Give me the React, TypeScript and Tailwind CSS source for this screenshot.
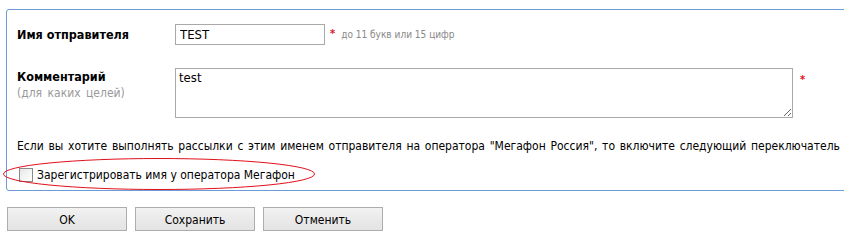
export default function App() {
  const font = { fontFamily: '"DejaVu Sans Condensed", "DejaVu Sans", sans-serif' };

  return (
    <div className="w-[844px] h-[243px] overflow-hidden bg-white text-[12px] text-black" style={font}>
      <div className="relative ml-[6px] mt-[9px] w-[900px] h-[182px] border border-[#6c9bd5] rounded-[3px] pl-[10px] pt-[14px]">
        <div className="flex items-center h-[21px]">
          <div className="w-[158px] font-bold pt-[1px] text-[12.5px]">Имя отправителя</div>
          <input
            readOnly
            defaultValue="TEST"
            className="w-[150px] h-[21px] border border-[#a9a9a9] px-[4px] text-[13px] outline-none"
            style={font}
          />
          <span className="ml-[5px] text-[#e0101a] text-[11px] font-bold">*</span>
          <span className="ml-[6px] text-[10px] text-[#888888]">до 11 букв или 15 цифр</span>
        </div>

        <div className="flex items-start mt-[23px]">
          <div className="w-[158px] pt-[1px] leading-[16px]">
            <div className="font-bold text-[12.5px]">Комментарий</div>
            <div className="text-[#999999] [word-spacing:2px]">(для каких целей)</div>
          </div>
          <textarea
            readOnly
            defaultValue="test"
            className="w-[618px] h-[50px] border border-[#a9a9a9] px-[3px] py-[1px] text-[13px] leading-[16px] outline-none"
            style={font}
          />
          <span className="ml-[7px] mt-[4px] text-[#e0101a] text-[11px] font-bold">*</span>
        </div>

        <p className="mt-[20px] leading-[16px] whitespace-nowrap [word-spacing:1.3px]">
          Если вы хотите выполнять рассылки с этим именем отправителя на оператора "Мегафон Россия", то включите следующий переключатель
        </p>

        <label className="flex items-center mt-[13px] h-[16px]">
          <span className="ml-[2px] w-[14px] h-[14px] border border-[#8a8a8a] bg-gradient-to-br from-[#e8e8e8] to-white" />
          <span className="ml-[4px]">Зарегистрировать имя у оператора Мегафон</span>
        </label>

        <svg className="absolute left-[-5px] top-[147px]" width="320" height="34" viewBox="0 0 320 34">
          <ellipse cx="157" cy="17" rx="155.5" ry="15.5" fill="none" stroke="#e0101a" strokeWidth="1" />
        </svg>
      </div>

      <div className="flex gap-[8px] ml-[7px] mt-[16px]">
        {['OK', 'Сохранить', 'Отменить'].map(label => (
          <button
            key={label}
            className="w-[120px] h-[24px] border border-[#adadad] bg-gradient-to-b from-[#f2f2f2] to-[#e3e3e3] text-[12px] pt-[1px]"
            style={font}
          >
            {label}
          </button>
        ))}
      </div>
    </div>
  );
}
